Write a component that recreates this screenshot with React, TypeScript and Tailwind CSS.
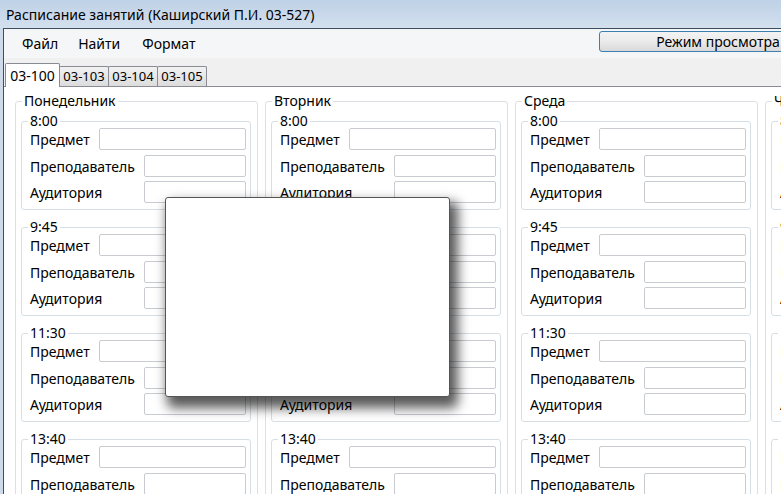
const days = ['Понедельник', 'Вторник', 'Среда', 'Четверг']
const times = ['8:00', '9:45', '11:30', '13:40']
const tabs = ['03-100', '03-103', '03-104', '03-105']

function TimeGroup({ time }: { time: string }) {
    return (
        <fieldset className="border border-[#d5dfe5] rounded-[3px] pl-[8px] pr-[4px] pb-[6px] mb-[10px]">
            <legend className="-ml-[2px] px-[2px] leading-[14px]">{time}</legend>
            <div className="flex items-center h-[22px]">
                <span className="w-[69px]">Предмет</span>
                <div className="flex-1 h-[22px] border border-[#c8ccd1] rounded-[2px] bg-white" />
            </div>
            <div className="flex items-center h-[22px] mt-[5px]">
                <span className="w-[114px]">Преподаватель</span>
                <div className="flex-1 h-[22px] border border-[#c8ccd1] rounded-[2px] bg-white" />
            </div>
            <div className="flex items-center h-[22px] mt-[4px]">
                <span className="w-[114px]">Аудитория</span>
                <div className="flex-1 h-[22px] border border-[#c8ccd1] rounded-[2px] bg-white" />
            </div>
        </fieldset>
    )
}

export default function App() {
    return (
        <div className="relative w-[781px] h-[494px] overflow-hidden bg-[#c9d9ea] font-['Noto_Sans',sans-serif] text-[14px] text-black">
            {/* Title bar */}
            <div className="h-[28px] flex items-center pl-[6px] text-[14px] bg-gradient-to-b from-[#bfd1e6] to-[#d3e0ee]">
                Расписание занятий (Каширский П.И. 03-527)
            </div>

            <div className="flex h-[466px]">
                <div className="w-[3px] bg-[#ccdaea]" />
                <div className="flex-1 min-w-0 flex flex-col border-l border-t border-[#3f4d5e] bg-[#f0f0f0]">
                    {/* Menu */}
                    <div className="h-[29px] flex items-center bg-[#f5f6f7] text-[14px] whitespace-nowrap">
                        <span className="ml-[18px]">Файл</span>
                        <span className="ml-[20px]">Найти</span>
                        <span className="ml-[22px]">Формат</span>
                        <div className="ml-auto self-start mt-[2px] w-[238px] h-[21px] shrink-0 translate-x-[56px] border border-[#3c7fb1] rounded-[3px] bg-gradient-to-b from-[#f3f3f3] via-[#ebebeb] to-[#d9d9d9] flex items-center justify-center text-[14px]">
                            Режим просмотра
                        </div>
                    </div>

                    {/* Tabs */}
                    <div className="h-[29px] flex items-end pl-[1px] border-b border-[#898c95] bg-[#f0f0f0]">
                        {tabs.map((t, i) =>
                            i === 0 ? (
                                <div
                                    key={t}
                                    className="h-[24px] w-[55px] -mb-px border border-b-0 border-[#898c95] bg-white flex items-center justify-center rounded-t-[2px]"
                                >
                                    {t}
                                </div>
                            ) : (
                                <div
                                    key={t}
                                    className="h-[20px] w-[50px] -ml-px first:ml-0 border border-b-0 border-[#898c95] bg-gradient-to-b from-[#f2f2f2] to-[#dcdcdc] flex items-center justify-center text-[13px] rounded-t-[2px]"
                                >
                                    {t}
                                </div>
                            )
                        )}
                    </div>

                    {/* Tab page */}
                    <div className="flex-1 bg-white flex gap-[7px] pl-[11px] pt-[6px] overflow-hidden">
                        {days.map((d) => (
                            <fieldset
                                key={d}
                                className="w-[243px] shrink-0 border border-[#dcdfe3] rounded-[3px] pl-[5px] pr-[6px] h-[600px]"
                            >
                                <legend className="ml-[1px] px-[2px] leading-[16px]">{d}</legend>
                                <div className="mt-[5px]">
                                    {times.map((t) => (
                                        <TimeGroup key={t} time={t} />
                                    ))}
                                </div>
                            </fieldset>
                        ))}
                    </div>
                </div>
            </div>

            {/* Empty popup window */}
            <div className="absolute left-[165px] top-[197px] w-[285px] h-[200px] bg-white border border-[#555] rounded-[3px] shadow-[5px_8px_12px_3px_rgba(0,0,0,0.65)]" />
        </div>
    )
}
